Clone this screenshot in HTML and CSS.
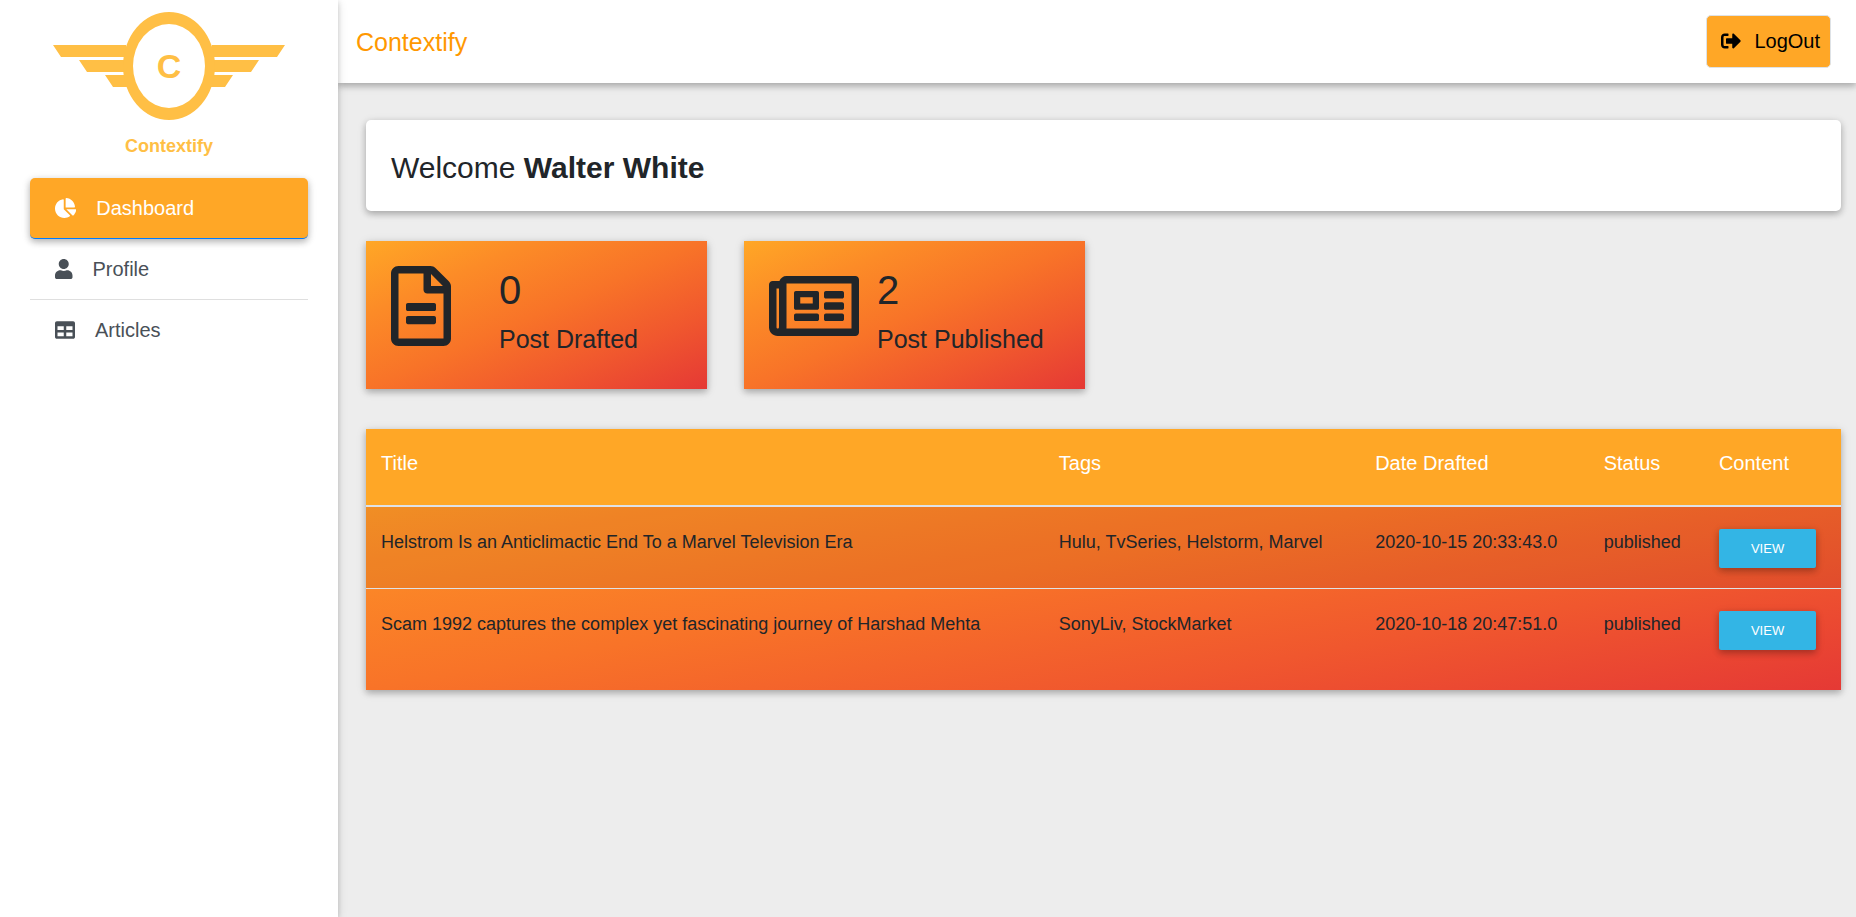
FILE: index.html
```html
<!DOCTYPE html>
<html lang="en">
<head>
  <meta charset="utf-8">
  <meta name="viewport" content="width=device-width, initial-scale=1">
  <title>Contextify</title>
  <link rel="stylesheet" href="styles.css">
</head>
<body>
  <div class="layout">
    <aside class="sidebar">
      <a class="logo" href="#">
        <svg viewBox="0 0 236 154" role="img" aria-label="Contextify">
          <path d="M2 35H75V47H10zM28 50H75V62H36zM54 65H80V77H62zM234 35H161V47H226zM208 50H161V62H200zM182 65H156V77H174z"/>
          <path fill-rule="evenodd" d="M118 2a46 54 0 0 1 0 108a46 54 0 0 1 0-108zm0 12a36 42 0 0 0 0 84a36 42 0 0 0 0-84z"/>
          <text class="logo-letter" x="118" y="68">C</text>
          <text class="logo-name" x="118" y="142">Contextify</text>
        </svg>
      </a>
      <nav class="menu">
        <a class="menu-item active" href="#">
          <svg class="icon" viewBox="0 0 544 512" aria-hidden="true"><path d="M527.79 288H290.5l158.03 158.03c6.04 6.04 15.98 6.53 22.19.68 38.7-36.46 65.32-85.61 73.13-140.86 1.34-9.46-6.51-17.85-16.06-17.85zm-15.83-64.8C503.72 103.74 408.26 8.28 288.8.04 279.68-.59 272 7.1 272 16.24V240h223.77c9.14 0 16.82-7.68 16.19-16.8zM224 288V50.71c0-9.55-8.39-17.4-17.84-16.06C86.99 51.49-4.1 155.6.14 280.37 4.5 408.51 114.83 513.59 243.03 511.98c50.4-.63 96.97-16.87 135.26-44.03 7.9-5.6 8.42-17.23 1.57-24.08L224 288z"/></svg>
          <span>Dashboard</span>
        </a>
        <a class="menu-item" href="#">
          <svg class="icon" viewBox="0 0 448 512" aria-hidden="true"><path d="M224 256c70.7 0 128-57.3 128-128S294.700 0 224 0 96 57.300 96 128s57.300 128 128 128zm89.600 32h-16.700c-22.200 10.200-46.900 16-72.900 16s-50.600-5.800-72.900-16h-16.700C60.200 288 0 348.200 0 422.400V464c0 26.500 21.500 48 48 48h352c26.500 0 48-21.500 48-48v-41.600c0-74.200-60.200-134.400-134.400-134.400z"/></svg>
          <span>Profile</span>
        </a>
        <a class="menu-item" href="#">
          <svg class="icon" viewBox="0 0 512 512" aria-hidden="true"><path d="M464 32H48C21.490 32 0 53.490 0 80v352c0 26.510 21.490 48 48 48h416c26.510 0 48-21.490 48-48V80c0-26.510-21.490-48-48-48zM224 416H64v-96h160v96zm0-160H64v-96h160v96zm224 160H288v-96h160v96zm0-160H288v-96h160v96z"/></svg>
          <span>Articles</span>
        </a>
      </nav>
    </aside>

    <div class="content">
      <header class="topbar">
        <a class="brand" href="#">Contextify</a>
        <button class="logout" type="button">
          <svg class="icon" viewBox="0 0 512 512" aria-hidden="true"><path d="M497 273L329 441c-15 15-41 4.500-41-17v-96H152c-13.300 0-24-10.700-24-24v-96c0-13.300 10.700-24 24-24h136V88c0-21.400 25.900-32 41-17l168 168c9.300 9.400 9.300 24.600 0 34zM192 436v-40c0-6.600-5.400-12-12-12H96c-17.700 0-32-14.300-32-32V160c0-17.700 14.300-32 32-32h84c6.600 0 12-5.400 12-12V76c0-6.600-5.400-12-12-12H96c-53 0-96 43-96 96v192c0 53 43 96 96 96h84c6.600 0 12-5.400 12-12z"/></svg>
          <span>LogOut</span>
        </button>
      </header>

      <main class="main">
        <h1 class="welcome">Welcome <strong>Walter White</strong></h1>

        <section class="stats">
          <div class="stat">
            <svg class="stat-icon" viewBox="0 0 384 512" aria-hidden="true"><path d="M288 248v28c0 6.600-5.400 12-12 12H108c-6.600 0-12-5.400-12-12v-28c0-6.600 5.400-12 12-12h168c6.600 0 12 5.400 12 12zm-12 72H108c-6.600 0-12 5.400-12 12v28c0 6.600 5.400 12 12 12h168c6.600 0 12-5.400 12-12v-28c0-6.600-5.400-12-12-12zm108-188.100V464c0 26.500-21.500 48-48 48H48c-26.500 0-48-21.500-48-48V48C0 21.500 21.500 0 48 0h204.100C264.800 0 277 5.100 286 14.100L369.900 98c9 8.900 14.100 21.200 14.100 33.900zm-128-80V128h76.100L256 51.900zM336 464V176H232c-13.300 0-24-10.700-24-24V48H48v416h288z"/></svg>
            <div>
              <p class="stat-value">0</p>
              <p class="stat-label">Post Drafted</p>
            </div>
          </div>
          <div class="stat">
            <svg class="stat-icon" viewBox="0 0 576 512" aria-hidden="true"><path d="M552 64H112c-20.858 0-38.643 13.377-45.248 32H24c-13.255 0-24 10.745-24 24v272c0 30.928 25.072 56 56 56h496c13.255 0 24-10.745 24-24V88c0-13.255-10.745-24-24-24zM48 392V144h16v248c0 4.411-3.589 8-8 8s-8-3.589-8-8zm480 8H111.422c.374-2.614.578-5.283.578-8V112h416v288zM172 280h136c6.627 0 12-5.373 12-12v-96c0-6.627-5.373-12-12-12H172c-6.627 0-12 5.373-12 12v96c0 6.627 5.373 12 12 12zm28-80h80v40h-80v-40zm-40 140v-24c0-6.627 5.373-12 12-12h136c6.627 0 12 5.373 12 12v24c0 6.627-5.373 12-12 12H172c-6.627 0-12-5.373-12-12zm192 0v-24c0-6.627 5.373-12 12-12h104c6.627 0 12 5.373 12 12v24c0 6.627-5.373 12-12 12H364c-6.627 0-12-5.373-12-12zm0-144v-24c0-6.627 5.373-12 12-12h104c6.627 0 12 5.373 12 12v24c0 6.627-5.373 12-12 12H364c-6.627 0-12-5.373-12-12zm0 72v-24c0-6.627 5.373-12 12-12h104c6.627 0 12 5.373 12 12v24c0 6.627-5.373 12-12 12H364c-6.627 0-12-5.373-12-12z"/></svg>
            <div>
              <p class="stat-value">2</p>
              <p class="stat-label">Post Published</p>
            </div>
          </div>
        </section>

        <section class="posts">
          <table class="posts-table">
            <thead>
              <tr>
                <th scope="col">Title</th>
                <th scope="col">Tags</th>
                <th scope="col">Date Drafted</th>
                <th scope="col">Status</th>
                <th scope="col">Content</th>
              </tr>
            </thead>
            <tbody>
              <tr>
                <td>Helstrom Is an Anticlimactic End To a Marvel Television Era</td>
                <td>Hulu, TvSeries, Helstorm, Marvel</td>
                <td>2020-10-15 20:33:43.0</td>
                <td>published</td>
                <td><button class="view" type="button">VIEW</button></td>
              </tr>
              <tr>
                <td>Scam 1992 captures the complex yet fascinating journey of Harshad Mehta</td>
                <td>SonyLiv, StockMarket</td>
                <td>2020-10-18 20:47:51.0</td>
                <td>published</td>
                <td><button class="view" type="button">VIEW</button></td>
              </tr>
            </tbody>
          </table>
        </section>
      </main>
    </div>
  </div>
</body>
</html>
```
FILE: styles.css
```css
:root {
  --orange: #ffa726;
  --ink: #212529;
  --shadow: 0 2px 5px 0 rgba(0, 0, 0, .16), 0 2px 10px 0 rgba(0, 0, 0, .12);
  --shadow-strong: 0 3px 6px 0 rgba(0, 0, 0, .2), 0 2px 10px 0 rgba(0, 0, 0, .14);
  --sunset: linear-gradient(to bottom right, #ffa726, #fc8b27 25%, #f87328 50%, #f0572e 75%, #e53935);
}

* {
  box-sizing: border-box;
}

body {
  margin: 0;
  background: #ededed;
  color: var(--ink);
  font-family: "Liberation Sans", Arial, sans-serif;
  font-size: 18px;
  line-height: 27px;
}

a {
  color: inherit;
  text-decoration: none;
}

button {
  font-family: inherit;
  cursor: pointer;
}

.icon {
  height: 20px;
  fill: currentColor;
}

.layout {
  display: grid;
  grid-template-columns: 338px minmax(0, 1fr);
  min-height: 100vh;
}

/* Sidebar */
.sidebar {
  z-index: 1;
  padding: 10px 30px;
  background: #fff;
  box-shadow: var(--shadow);
}

.logo {
  display: block;
  padding: 0 21px 14px;
}

.logo svg {
  display: block;
  width: 100%;
  fill: #ffbf45;
}

.logo-letter,
.logo-name {
  font-weight: 700;
  text-anchor: middle;
}

.logo-letter {
  font-size: 34px;
}

.logo-name {
  font-size: 18px;
}

.menu-item {
  display: flex;
  align-items: center;
  gap: 20px;
  padding: 15px 25px;
  border-bottom: 1px solid #dfdfdf;
  color: #495057;
  font-size: 20px;
  line-height: 30px;
}

.menu-item:last-child {
  border-bottom: 0;
}

.menu-item.active {
  border-color: #007bff;
  border-radius: 5px;
  background: var(--orange);
  box-shadow: var(--shadow-strong);
  color: #fff;
}

/* Top bar */
.topbar {
  display: flex;
  align-items: center;
  justify-content: space-between;
  padding: 15px 25px 15px 18px;
  background: #fff;
  box-shadow: var(--shadow-strong);
}

.brand {
  color: #ff9800;
  font-size: 25px;
  line-height: 38px;
}

.logout {
  display: flex;
  align-items: center;
  gap: 13px;
  padding: 10px 10px 11px 14px;
  border: 1px solid #dee2e6;
  border-radius: 5px;
  background: var(--orange);
  color: #000;
  font-size: 20px;
  line-height: 30px;
}

/* Page body */
.main {
  padding: 37px 15px 37px 28px;
}

.welcome {
  margin: 0 0 30px;
  padding: 25px 25px 21px;
  border-radius: 5px;
  background: #fff;
  box-shadow: var(--shadow-strong);
  font-size: 30px;
  font-weight: 400;
  line-height: 45px;
}

.stats {
  display: flex;
  gap: 37px;
  margin-bottom: 40px;
}

.stat {
  display: grid;
  grid-template-columns: 108px 1fr;
  width: 341px;
  padding: 25px 25px 31px;
  background: var(--sunset);
  box-shadow: var(--shadow-strong);
}

.stat-icon {
  height: 80px;
  fill: currentColor;
}

.stat-value,
.stat-label {
  margin: 0;
}

.stat-value {
  margin-bottom: 6px;
  font-size: 40px;
  line-height: 48px;
}

.stat-label {
  font-size: 25px;
  line-height: 38px;
}

/* Posts table */
.posts {
  padding-bottom: 20px;
  background: var(--sunset);
  box-shadow: var(--shadow-strong);
}

.posts-table {
  width: 100%;
  border-spacing: 0;
  text-align: left;
}

.posts-table th {
  padding: 19px 15px 27px;
  border-bottom: 2px solid #dee2e6;
  background: var(--orange);
  color: #fff;
  font-size: 20px;
  font-weight: 400;
  line-height: 30px;
}

.posts-table td {
  padding: 22px 15px 20px;
  vertical-align: top;
}

.posts-table tr:nth-child(even) td {
  border-top: 1px solid #dee2e6;
}

.posts-table tbody tr:nth-child(odd) {
  background: rgba(0, 0, 0, .05);
}

.view {
  display: block;
  padding: 10px 32px;
  border: 0;
  border-radius: 2px;
  background: #33b5e5;
  box-shadow: var(--shadow-strong);
  color: #fff;
  font-size: 13px;
  line-height: 19px;
}
```
